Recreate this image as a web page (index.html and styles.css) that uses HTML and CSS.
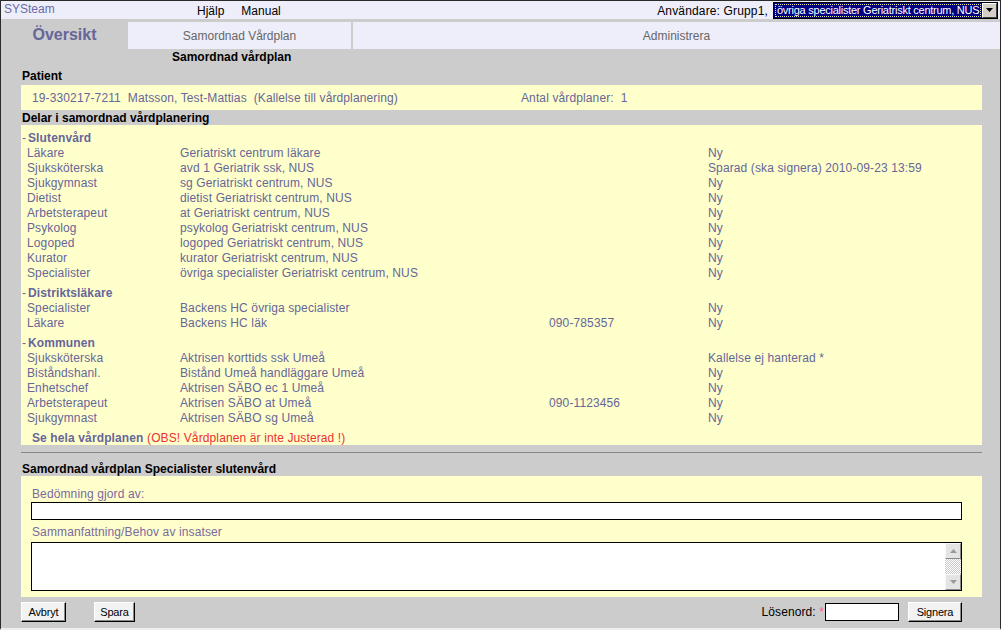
FILE: index.html
```html
<!DOCTYPE html>
<html lang="sv">
<head>
<meta charset="utf-8">
<title>SYSteam – Samordnad vårdplan</title>
<link rel="stylesheet" href="styles.css">
</head>
<body>
<div class="page">
  <header class="topbar">
    <span class="brand">SYSteam</span>
    <nav class="toplinks"><a class="toplink">Hjälp</a><a class="toplink">Manual</a></nav>
    <div class="user">
      <span class="user-label">Användare: Grupp1,</span>
      <div class="select">
        <span class="select-value"><span class="select-focus">övriga specialister Geriatriskt centrum, NUS</span></span>
        <span class="select-btn"><svg width="7" height="4" viewBox="0 0 7 4"><path d="M0 0h7L3.5 4z" fill="#000"/></svg></span>
      </div>
    </div>
  </header>

  <nav class="tabs">
    <a class="tab tab-active">Översikt</a>
    <a class="tab tab-plan">Samordnad Vårdplan</a>
    <a class="tab tab-admin">Administrera</a>
  </nav>

  <main class="content">
    <h1 class="page-title">Samordnad vårdplan</h1>

    <h2 class="heading heading-patient">Patient</h2>
    <section class="panel patient">
      <span>19-330217-7211&nbsp; Matsson, Test-Mattias&nbsp; (Kallelse till vårdplanering)</span>
      <span>Antal vårdplaner:&nbsp; 1</span>
    </section>

    <h2 class="heading heading-parts">Delar i samordnad vårdplanering</h2>
    <section class="panel parts">
      <div class="group-title"><span class="dash">-</span><b>Slutenvård</b></div>
      <div class="row"><span>Läkare</span><span>Geriatriskt centrum läkare</span><span></span><span>Ny</span></div>
      <div class="row"><span>Sjuksköterska</span><span>avd 1 Geriatrik ssk, NUS</span><span></span><span>Sparad (ska signera) 2010-09-23 13:59</span></div>
      <div class="row"><span>Sjukgymnast</span><span>sg Geriatriskt centrum, NUS</span><span></span><span>Ny</span></div>
      <div class="row"><span>Dietist</span><span>dietist Geriatriskt centrum, NUS</span><span></span><span>Ny</span></div>
      <div class="row"><span>Arbetsterapeut</span><span>at Geriatriskt centrum, NUS</span><span></span><span>Ny</span></div>
      <div class="row"><span>Psykolog</span><span>psykolog Geriatriskt centrum, NUS</span><span></span><span>Ny</span></div>
      <div class="row"><span>Logoped</span><span>logoped Geriatriskt centrum, NUS</span><span></span><span>Ny</span></div>
      <div class="row"><span>Kurator</span><span>kurator Geriatriskt centrum, NUS</span><span></span><span>Ny</span></div>
      <div class="row"><span>Specialister</span><span>övriga specialister Geriatriskt centrum, NUS</span><span></span><span>Ny</span></div>

      <div class="group-title"><span class="dash">-</span><b>Distriktsläkare</b></div>
      <div class="row"><span>Specialister</span><span>Backens HC övriga specialister</span><span></span><span>Ny</span></div>
      <div class="row"><span>Läkare</span><span>Backens HC läk</span><span>090-785357</span><span>Ny</span></div>

      <div class="group-title"><span class="dash">-</span><b>Kommunen</b></div>
      <div class="row"><span>Sjuksköterska</span><span>Aktrisen korttids ssk Umeå</span><span></span><span>Kallelse ej hanterad *</span></div>
      <div class="row"><span>Biståndshanl.</span><span>Bistånd Umeå handläggare Umeå</span><span></span><span>Ny</span></div>
      <div class="row"><span>Enhetschef</span><span>Aktrisen SÄBO ec 1 Umeå</span><span></span><span>Ny</span></div>
      <div class="row"><span>Arbetsterapeut</span><span>Aktrisen SÄBO at Umeå</span><span>090-1123456</span><span>Ny</span></div>
      <div class="row"><span>Sjukgymnast</span><span>Aktrisen SÄBO sg Umeå</span><span></span><span>Ny</span></div>

      <div class="see-all"><a class="see-link">Se hela vårdplanen</a> <span class="warn">(OBS! Vårdplanen är inte Justerad !)</span></div>
    </section>

    <div class="divider"></div>

    <h2 class="heading heading-form">Samordnad vårdplan Specialister slutenvård</h2>
    <section class="panel form">
      <label class="label" for="bedomning">Bedömning gjord av:</label>
      <input class="text-input" id="bedomning" type="text">
      <label class="label label-second" for="sammanfattning">Sammanfattning/Behov av insatser</label>
      <div class="textarea-box">
        <textarea class="textarea" id="sammanfattning"></textarea>
        <div class="scrollbar">
          <span class="sb-btn"><svg width="7" height="4" viewBox="0 0 7 4"><path d="M0 4h7L3.5 0z" fill="#9a9a9a"/></svg></span>
          <span class="sb-track"></span>
          <span class="sb-btn"><svg width="7" height="4" viewBox="0 0 7 4"><path d="M0 0h7L3.5 4z" fill="#9a9a9a"/></svg></span>
        </div>
      </div>
    </section>

    <div class="actions">
      <button class="btn btn-cancel" type="button">Avbryt</button>
      <button class="btn btn-save" type="button">Spara</button>
      <div class="sign">
        <label class="pw-label" for="pw">Lösenord: <span class="req">*</span></label>
        <input class="pw-input" id="pw" type="password">
        <button class="btn btn-sign" type="button">Signera</button>
      </div>
    </div>
  </main>
</div>
</body>
</html>
```

FILE: styles.css
```css
* { box-sizing: border-box; }
html, body { margin: 0; padding: 0; }
body {
  font-family: "Liberation Sans", Arial, sans-serif;
  font-size: 12px;
  color: #000;
  background: #cccccc;
}
.page {
  width: 1001px;
  height: 630px;
  border: 1px solid #2a2a2a;
  border-bottom: 2px solid #eeeeee;
  background: #cccccc;
  display: flex;
  flex-direction: column;
  overflow: hidden;
}

/* top bar */
.topbar {
  height: 18px;
  background: #eeeefa;
  display: flex;
  align-items: center;
}
.brand {
  width: 196px;
  padding-left: 3px;
  color: #6a6aa6;
  line-height: 14px;
  align-self: flex-start;
  padding-top: 1px;
}
.toplinks { display: flex; gap: 17px; padding-top: 2px; }
.toplink { color: #000; }
.user {
  margin-left: auto;
  display: flex;
  align-items: center;
  gap: 5px;
  padding-right: 2px;
}
.user-label { color: #000; padding-top: 1px; letter-spacing: 0.15px; }
.select {
  width: 225px;
  height: 17px;
  border: 1px solid #000;
  background: #fff;
  display: flex;
}
.select-value {
  flex: 1;
  background: #000080;
  padding: 1px;
  display: flex;
}
.select-focus {
  flex: 1;
  border: 1px dotted #e8e890;
  color: #fff;
  font-size: 11px;
  line-height: 11px;
  letter-spacing: -0.25px;
  padding-left: 1px;
  white-space: nowrap;
  overflow: hidden;
}
.select-btn {
  width: 15px;
  background: #d4d0c8;
  border: 1px solid;
  border-color: #fff #404040 #404040 #fff;
  display: flex;
  align-items: center;
  justify-content: center;
}

/* tabs */
.tabs {
  display: flex;
  height: 27px;
  margin-top: 3px;
}
.tab {
  display: flex;
  align-items: center;
  justify-content: center;
  color: #666666;
}
.tab-active {
  width: 127px;
  font-size: 16px;
  font-weight: bold;
  color: #666699;
  padding-bottom: 1px;
}
.tab-plan {
  width: 223px;
  background: #eeeefa;
}
.tab-admin {
  flex: 1;
  margin-left: 2px;
  background: #eeeefa;
}

/* content */
.content {
  padding: 0 18px 0 20px;
  display: flex;
  flex-direction: column;
}
.page-title {
  margin: 0;
  font-size: 12px;
  font-weight: bold;
  line-height: 16px;
  padding-left: 151px;
}
.heading {
  margin: 0;
  font-size: 12px;
  font-weight: bold;
  line-height: 15px;
  padding-left: 1px;
}
.heading-patient { line-height: 20px; padding-top: 1px; height: 20px; }
.heading-parts { padding-top: 1px; height: 15px; }
.heading-form { line-height: 16px; padding-top: 8px; height: 23px; }

.panel {
  background: #ffffcc;
  color: #666699;
  line-height: 15px;
  letter-spacing: 0.12px;
}
.patient {
  display: grid;
  grid-template-columns: 489px 1fr;
  padding: 6px 0 4px 11px;
}
.parts { padding: 6px 0 0 0; }
.group-title {
  margin-top: 5px;
  display: flex;
}
.group-title:first-child { margin-top: 0; }
.dash { width: 7px; padding-left: 1px; }
.row {
  display: grid;
  grid-template-columns: 153px 369px 159px 1fr;
  padding-left: 6px;
  white-space: nowrap;
}
.see-all {
  margin-top: 5px;
  padding-left: 11px;
  line-height: 14px;
  height: 14px;
}
.see-link { font-weight: bold; color: #666699; }
.warn { color: #ee2f2f; }

.divider {
  height: 1px;
  background: #888888;
  margin-top: 7px;
}

.form {
  padding: 11px 20px 6px 10px;
  display: flex;
  flex-direction: column;
}
.label { padding-left: 1px; color: #7a6a9e; }
.label-second { margin-top: 5px; height: 14px; line-height: 14px; }
.text-input {
  height: 18px;
  margin: 0;
  border: 1px solid #000;
  background: #fff;
  font: inherit;
  padding: 0 2px;
}
.textarea-box {
  margin-top: 3px;
  height: 49px;
  border: 1px solid #000;
  background: #fff;
  display: flex;
}
.textarea {
  flex: 1;
  border: 0;
  resize: none;
  font: inherit;
  padding: 2px;
  outline: none;
}
.scrollbar {
  width: 16px;
  display: flex;
  flex-direction: column;
}
.sb-btn {
  height: 16px;
  background: #e4e4e4;
  border: 1px solid;
  border-color: #f8f8f8 #8a8a8a #8a8a8a #f8f8f8;
  display: flex;
  align-items: center;
  justify-content: center;
}
.sb-track {
  flex: 1;
  background: repeating-conic-gradient(#c8c8c8 0 25%, #ffffff 0 50%) 0 0 / 2px 2px;
}

/* bottom actions */
.actions {
  display: flex;
  align-items: center;
  padding-top: 5px;
}
.btn {
  height: 20px;
  font-family: "Liberation Sans", Arial, sans-serif;
  font-size: 11px;
  letter-spacing: -0.2px;
  color: #000;
  background: #f2f2f2;
  border: 1px solid;
  border-color: #ffffff #000000 #000000 #ffffff;
  box-shadow: inset -1px -1px 0 #8a8a8a;
  padding: 0;
}
.btn-cancel { width: 45px; }
.btn-save { width: 41px; margin-left: 28px; }
.sign {
  margin-left: auto;
  display: flex;
  align-items: center;
  padding-right: 20px;
}
.pw-label { color: #000; letter-spacing: 0.1px; }
.req { color: #ff5c9a; }
.pw-input {
  width: 74px;
  height: 18px;
  margin-left: 1px;
  border: 1px solid #000;
  background: #fff;
  padding: 0 2px;
}
.btn-sign { width: 54px; margin-left: 9px; }
```
